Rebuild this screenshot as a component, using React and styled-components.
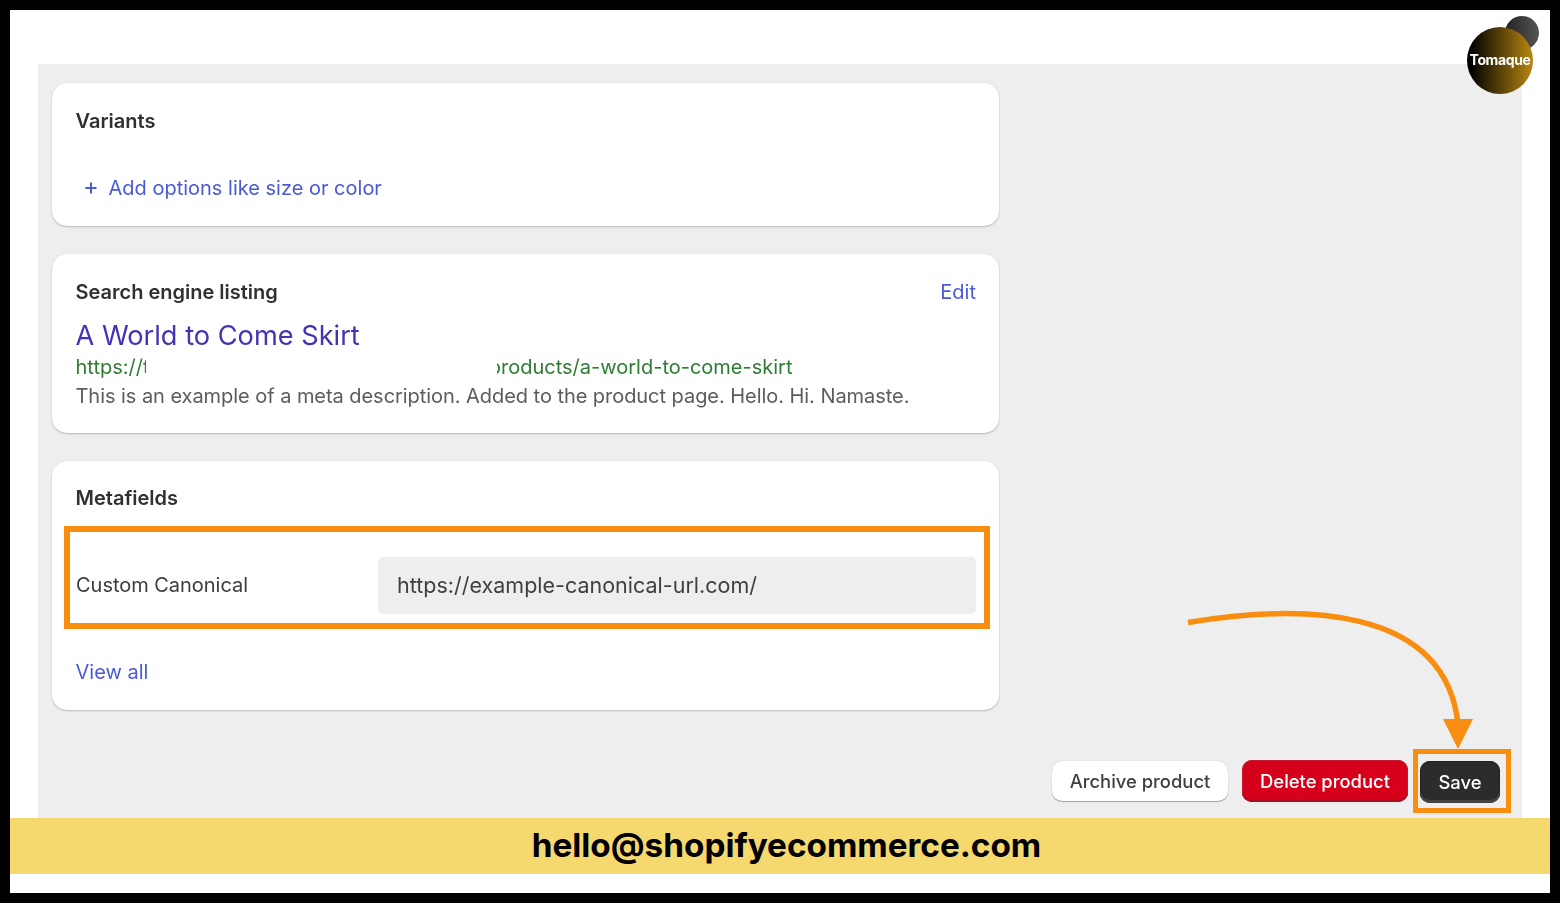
import React from "react";
import styled, { createGlobalStyle } from "styled-components";

const Global = createGlobalStyle`
  html, body { margin: 0; padding: 0; background: #fff; }
  body { min-height: 907px; font-family: "Inter", "Liberation Sans", sans-serif; color: #303030; }
  * { box-sizing: border-box; }
`;

const Frame = styled.div`
  position: relative;
  width: 1560px;
  height: 903px;
  border: 10px solid #000;
  background: #fff;
  padding-top: 54px;
  overflow: hidden;
`;
const Panel = styled.main`
  position: relative;
  margin: 0 28px;
  height: 754px;
  background: #eee;
  padding: 19px 11px 5px 14px;
  display: flex;
  flex-direction: column;
`;
const Stack = styled.div`
  width: 947px;
  display: flex;
  flex-direction: column;
  gap: 28px;
  filter: blur(0.5px);
`;
const Card = styled.section`
  background: #fff;
  border-radius: 15px;
  height: ${(p) => p.$h}px;
  box-shadow: 0 1px 2px rgba(0, 0, 0, 0.22), 0 0 1px rgba(0, 0, 0, 0.12);
  padding: ${(p) => p.$pt || 24}px 23px 0 23.5px;
`;
const CardHead = styled.div`
  display: flex;
  justify-content: space-between;
  align-items: center;
`;
const Title = styled.h2`
  margin: 0;
  font-size: 20px;
  line-height: 28px;
  font-weight: 600;
  color: #303030;
`;
const LinkText = styled.a`
  font-size: 20px;
  line-height: 28px;
  color: #4a5ad6;
`;
const AddRow = styled.div`
  display: flex;
  align-items: center;
  gap: 11px;
  margin: 39px 0 0 8px;
`;
const SeoTitle = styled.div`
  font-size: 27.2px;
  line-height: 34px;
  color: #4631b5;
  margin-top: 13px;
`;
const UrlLine = styled.div`
  position: relative;
  display: flex;
  justify-content: space-between;
  width: 717px;
  font-size: 20px;
  line-height: 28px;
  color: #2e7d32;
  white-space: nowrap;
`;
const Redaction = styled.span`
  position: absolute;
  left: 70px;
  top: 0;
  bottom: 0;
  width: 351px;
  background: #fff;
`;
const Desc = styled.p`
  margin: 1px 0 0;
  font-size: 20px;
  line-height: 28px;
  letter-spacing: -0.05px;
  color: #5c5c5c;
`;
const Highlight = styled.div`
  border: 6px solid #f98d10;
  margin: 14px -14px 0 -11.5px;
  height: 103px;
  padding: 16px 8px 0 6px;
  display: flex;
  align-items: center;
`;
const FieldLabel = styled.label`
  width: 302px;
  flex: none;
  padding-bottom: 2px;
  font-size: 20px;
  letter-spacing: -0.03px;
  color: #3c3c3c;
`;
const FieldValue = styled.div`
  flex: 1;
  height: 57px;
  border-radius: 5px;
  background: #eee;
  padding: 0 19px 2px;
  display: flex;
  align-items: center;
  font-size: 21.5px;
  color: #3f3f3f;
`;
const ViewAll = styled(LinkText)`
  display: block;
  margin-top: 29px;
`;
const Actions = styled.div`
  margin-top: auto;
  display: flex;
  align-items: center;
  justify-content: flex-end;
`;
const Button = styled.button`
  font-family: inherit;
  font-size: 18.4px;
  font-weight: 500;
  border-radius: 10px;
  border: 0;
  padding: 0;
  width: ${(p) => p.$w}px;
  height: ${(p) => p.$hh}px;
  margin-right: ${(p) => p.$mr || 0}px;
  color: ${(p) => p.$fg};
  background: ${(p) => p.$bg};
  box-shadow: ${(p) => p.$shadow};
  filter: blur(0.4px);
`;
const SaveBox = styled.div`
  width: 98px;
  height: 64px;
  border: 5px solid #f98d10;
  padding: 7px 6px 5px 2px;
`;
const Banner = styled.div`
  height: 56px;
  background: #f5d96f;
  display: flex;
  align-items: center;
  justify-content: center;
  padding: 0 0 2px 13px;
  font-family: "Inter", "Liberation Sans", sans-serif;
  font-size: 33.3px;
  font-weight: 700;
  color: #000;
`;
const LogoWrap = styled.div`
  position: absolute;
  left: 1457px;
  top: 6px;
  width: 72px;
  height: 78px;
`;
const LogoBack = styled.div`
  position: absolute;
  right: 0;
  top: 0;
  width: 34px;
  height: 34px;
  border-radius: 50%;
  background: linear-gradient(90deg, #222, #555);
`;
const LogoFront = styled.div`
  position: absolute;
  left: 0;
  bottom: 0;
  width: 66px;
  height: 67px;
  border-radius: 50%;
  background: linear-gradient(90deg, #000 5%, #b08010 95%);
  display: flex;
  align-items: center;
  justify-content: center;
  padding-bottom: 2px;
  color: #fff;
  font-size: 14px;
  font-weight: 700;
  letter-spacing: -0.4px;
  filter: blur(0.4px);
`;
const Arrow = styled.svg`
  position: absolute;
  left: -10px;
  top: -10px;
  pointer-events: none;
`;

export default function App() {
  return (
    <>
      <Global />
      <Frame>
        <Panel>
          <Stack>
            <Card $h={143}>
              <Title>Variants</Title>
              <AddRow>
                <svg width="14" height="14" viewBox="0 0 14 14" aria-hidden="true">
                  <path d="M7 1.5v11M1.5 7h11" stroke="#4a5ad6" strokeWidth="2" />
                </svg>
                <LinkText>Add options like size or color</LinkText>
              </AddRow>
            </Card>
            <Card $h={179}>
              <CardHead>
                <Title>Search engine listing</Title>
                <LinkText>Edit</LinkText>
              </CardHead>
              <SeoTitle>A World to Come Skirt</SeoTitle>
              <UrlLine>
                <span>https://t</span>
                <span>/products/a-world-to-come-skirt</span>
                <Redaction />
              </UrlLine>
              <Desc>This is an example of a meta description. Added to the product page. Hello. Hi. Namaste.</Desc>
            </Card>
            <Card $h={249} $pt={23}>
              <Title>Metafields</Title>
              <Highlight>
                <FieldLabel>Custom Canonical</FieldLabel>
                <FieldValue>https://example-canonical-url.com/</FieldValue>
              </Highlight>
              <ViewAll>View all</ViewAll>
            </Card>
          </Stack>
          <Actions>
            <Button
              $w={176}
              $hh={40}
              $mr={14}
              $fg="#404040"
              $bg="#fff"
              $shadow="0 1px 1px rgba(0,0,0,.3), 0 0 1px rgba(0,0,0,.25)"
            >
              Archive product
            </Button>
            <Button
              $w={166}
              $hh={42}
              $mr={5}
              $fg="#fff"
              $bg="#d7001a"
              $shadow="inset 0 -2px 0 #a80f22, inset 0 0 0 1px #c0182c"
            >
              Delete product
            </Button>
            <SaveBox>
              <Button
                $w={80}
                $hh={42}
                $fg="#fff"
                $bg="#2c2c2c"
                $shadow="inset 0 -3px 0 #444, inset 0 0 0 1px #222"
              >
                Save
              </Button>
            </SaveBox>
          </Actions>
        </Panel>
        <Banner>hello@shopifyecommerce.com</Banner>
        <LogoWrap>
          <LogoBack />
          <LogoFront>Tomaque</LogoFront>
        </LogoWrap>
        <Arrow width="1560" height="907" viewBox="0 0 1560 907" aria-hidden="true">
          <path
            d="M1188 622.5C1300 604 1445 605 1458 724"
            fill="none"
            stroke="#f98d10"
            strokeWidth="5.5"
          />
          <path d="M1443 719H1473L1458 749Z" fill="#f98d10" />
        </Arrow>
      </Frame>
    </>
  );
}
